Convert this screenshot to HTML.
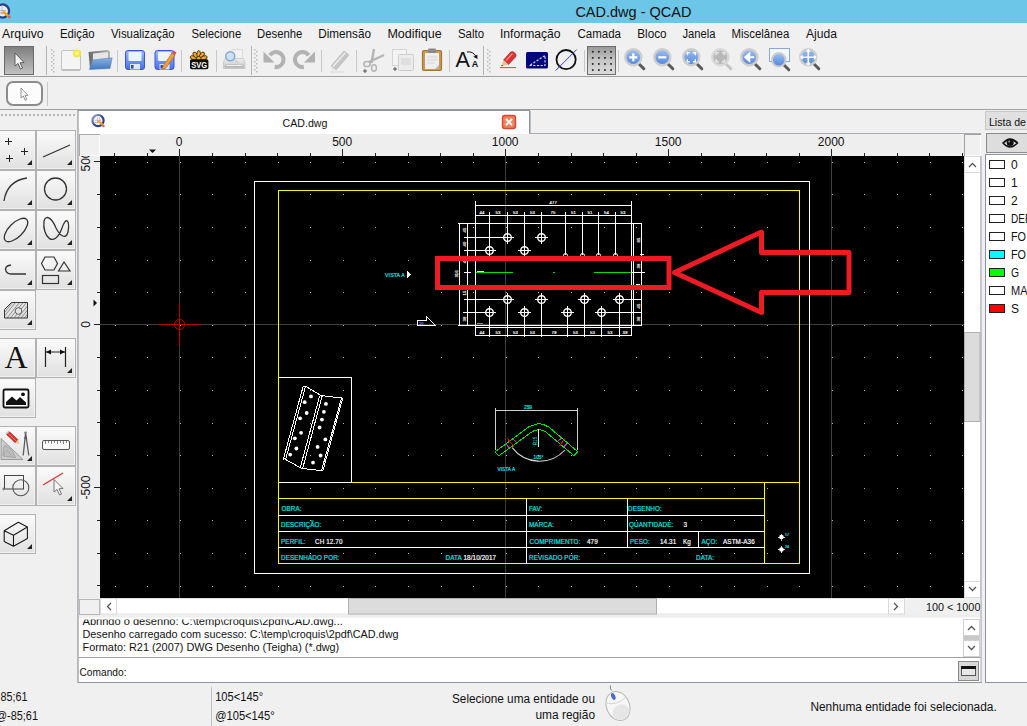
<!DOCTYPE html>
<html><head><meta charset="utf-8">
<style>
*{box-sizing:border-box;margin:0;padding:0}
html,body{width:1027px;height:726px;overflow:hidden;background:#f0f0f0;font-family:"Liberation Sans",sans-serif;font-size:12px;color:#000}
.abs,.abs *{position:absolute}
#title{left:0;top:0;width:1027px;height:23px;background:#6bc6e8}
#title .t{left:575px;top:2px;font-size:15px;color:#111;white-space:nowrap;letter-spacing:-0.1px}
#menu{left:0;top:23px;width:1027px;height:21px;background:#f0f0f0}
#menu span{top:3px;font-size:12.5px;white-space:nowrap}
.hl{height:1px;background:#a0a0a0;left:0;width:1027px}
.sep{width:1px;background:#c4c4c4;top:50px;height:22px}
.grip{width:3px;top:49px;height:24px;background:repeating-linear-gradient(to bottom,#b0b0b0 0 2px,transparent 2px 4px)}
.tbtn{border:1px solid #c9c9c9;background:linear-gradient(#fafafa,#e2e2e2);}
.tri{width:0;height:0;border-left:5px solid transparent;border-bottom:5px solid #222}
.white{background:#fff}
.sb{background:#fff;border:1px solid #d0d0d0}
.txt{white-space:nowrap}
</style></head>
<body>
<div id="title" class="abs"><svg style="left:570px;top:0" width="130" height="23" viewBox="570 0 130 23"><text x="575.4" y="17.3" font-size="15.5" font-family="Liberation Sans" fill="#111" textLength="116" lengthAdjust="spacingAndGlyphs">CAD.dwg - QCAD</text></svg>
<svg style="left:0;top:0" width="16" height="23" viewBox="0 0 16 23"><circle cx="2.500" cy="11" r="6.600" fill="#e8ecf4" stroke="#2a3f8c" stroke-width="2.300"/><path d="M-2 10.500h8M2 6.500v8" stroke="#a8a8b8" stroke-width="0.700"/><path d="M-1 13h5" stroke="#e07070" stroke-width="0.700"/><path d="M3 11.500L8.500 16.200" stroke="#f5a21a" stroke-width="2.600"/><circle cx="9.300" cy="17" r="1.400" fill="#e06060"/></svg>
</div>
<svg class="abs" style="left:0;top:23px" width="1027" height="21" viewBox="0 23 1027 21" font-family="Liberation Sans" font-size="12.5" fill="#111"><text x="2.1" y="38" textLength="41.5" lengthAdjust="spacingAndGlyphs">Arquivo</text><text x="59.9" y="38" textLength="34.7" lengthAdjust="spacingAndGlyphs">Edição</text><text x="111" y="38" textLength="63.6" lengthAdjust="spacingAndGlyphs">Visualização</text><text x="191.4" y="38" textLength="49.8" lengthAdjust="spacingAndGlyphs">Selecione</text><text x="257.1" y="38" textLength="45.2" lengthAdjust="spacingAndGlyphs">Desenhe</text><text x="318.3" y="38" textLength="52.7" lengthAdjust="spacingAndGlyphs">Dimensão</text><text x="387.4" y="38" textLength="54.3" lengthAdjust="spacingAndGlyphs">Modifique</text><text x="458" y="38" textLength="26.0" lengthAdjust="spacingAndGlyphs">Salto</text><text x="500" y="38" textLength="60.6" lengthAdjust="spacingAndGlyphs">Informação</text><text x="577.4" y="38" textLength="43.6" lengthAdjust="spacingAndGlyphs">Camada</text><text x="637.3" y="38" textLength="29.3" lengthAdjust="spacingAndGlyphs">Bloco</text><text x="682.5" y="38" textLength="33.1" lengthAdjust="spacingAndGlyphs">Janela</text><text x="731.5" y="38" textLength="57.8" lengthAdjust="spacingAndGlyphs">Miscelânea</text><text x="806" y="38" textLength="31.0" lengthAdjust="spacingAndGlyphs">Ajuda</text></svg>
<div class="abs hl" style="top:76px"></div>
<div class="abs hl" style="top:109px"></div>
<svg class="abs" style="left:0;top:44px" width="1027" height="66" viewBox="0 44 1027 66">
<defs>
<linearGradient id="gPress" x1="0" y1="0" x2="0" y2="1"><stop offset="0" stop-color="#7e7e7e"/><stop offset="1" stop-color="#c2c2c2"/></linearGradient>
<linearGradient id="gBlue" x1="0" y1="0" x2="0" y2="1"><stop offset="0" stop-color="#9cbcff"/><stop offset="1" stop-color="#4470ec"/></linearGradient>
<linearGradient id="gFold" x1="0" y1="0" x2="0" y2="1"><stop offset="0" stop-color="#8db3e2"/><stop offset="1" stop-color="#3f78c0"/></linearGradient>
<linearGradient id="gLens" x1="0" y1="0" x2="0" y2="1"><stop offset="0" stop-color="#9cc0f2"/><stop offset="1" stop-color="#5286dc"/></linearGradient>
<radialGradient id="gLensG" cx="0.4" cy="0.35" r="0.7"><stop offset="0" stop-color="#e6e6e6"/><stop offset="1" stop-color="#a8a8a8"/></radialGradient>
<g id="mag"><line x1="16" y1="17" x2="20.5" y2="21.5" stroke="#5a5a5a" stroke-width="3" stroke-linecap="round"/><circle cx="10" cy="10" r="8" fill="url(#gLens)" stroke="#cdcdcd" stroke-width="2.4"/></g>
</defs>
<!-- pressed arrow button -->
<rect x="4.5" y="46.5" width="29" height="28" fill="url(#gPress)" stroke="#6a6a6a"/>
<path d="M15 53 L15 66 L18 63.5 L20.5 69 L22.5 68 L20 62.8 L24 62.5 Z" fill="#f4f4f4" stroke="#555" stroke-width="0.9"/>
<rect x="46" y="46" width="1" height="29" fill="#b4b4b4"/>
<!-- grips -->
<g fill="#bcbcbc"><g id="grp"><rect x="51" y="49" width="1.500" height="1.500"/><rect x="53" y="51" width="1.500" height="1.500"/><rect x="51" y="53" width="1.500" height="1.500"/><rect x="53" y="55" width="1.500" height="1.500"/><rect x="51" y="57" width="1.500" height="1.500"/><rect x="53" y="59" width="1.500" height="1.500"/><rect x="51" y="61" width="1.500" height="1.500"/><rect x="53" y="63" width="1.500" height="1.500"/><rect x="51" y="65" width="1.500" height="1.500"/><rect x="53" y="67" width="1.500" height="1.500"/><rect x="51" y="69" width="1.500" height="1.500"/><rect x="53" y="71" width="1.500" height="1.500"/></g>
<use href="#grp" x="203"/><use href="#grp" x="436"/></g>
<!-- new -->
<rect x="61.5" y="50.5" width="19" height="20" rx="1.5" fill="#f4f4f4" stroke="#c2c2c2"/><rect x="62" y="69" width="18" height="1.5" fill="#bdbdbd"/>
<circle cx="77" cy="53.5" r="4" fill="#f2ea3a"/><circle cx="77" cy="53.5" r="2" fill="#fffb9a"/>
<!-- open -->
<linearGradient id="gBack" x1="0" y1="0" x2="1" y2="0"><stop offset="0" stop-color="#6a6a6a"/><stop offset="1" stop-color="#b4b4b4"/></linearGradient>
<path d="M88.500 52 L107.500 50 L110 51.500 L110 68 L90 69 Z" fill="url(#gBack)"/><path d="M93 53.500 L108 52 L108 62 L93 63 Z" fill="#e6e6e6"/>
<path d="M92.500 60 L112.200 57.800 L110 68.500 L89.500 69.500 Z" fill="url(#gFold)" stroke="#4a78b8" stroke-width="0.500"/>
<rect x="117" y="50" width="1" height="22" fill="#c8c8c8"/>
<!-- save -->
<g id="flop"><rect x="125.5" y="50.5" width="19" height="19" rx="2.5" fill="url(#gBlue)" stroke="#4152d6"/><rect x="128.5" y="52" width="13" height="9" rx="1" fill="#eef4ff"/><rect x="130" y="64" width="10" height="5.5" fill="#dfe6f6"/><rect x="131" y="65" width="2.5" height="3.5" fill="#2a45c8"/></g>
<use href="#flop" x="29.5"/>
<path d="M163 66 L172 53 L175 55 L166 68 L162 69.5 Z" fill="#f0a030" stroke="#b06010" stroke-width="0.6"/><path d="M172 53 L173.5 50.5 L176.5 52.5 L175 55 Z" fill="#e05050"/>
<rect x="181" y="50" width="1" height="22" fill="#c8c8c8"/>
<!-- svg icon -->
<g fill="#f5a623" stroke="#111" stroke-width="0.700"><ellipse cx="198.700" cy="54.200" rx="1.900" ry="3.600" transform="rotate(-72 198.700 59.500)"/><ellipse cx="198.700" cy="54.200" rx="1.900" ry="3.600" transform="rotate(-36 198.700 59.500)"/><ellipse cx="198.700" cy="54.200" rx="1.900" ry="3.600" transform="rotate(0 198.700 59.500)"/><ellipse cx="198.700" cy="54.200" rx="1.900" ry="3.600" transform="rotate(36 198.700 59.500)"/><ellipse cx="198.700" cy="54.200" rx="1.900" ry="3.600" transform="rotate(72 198.700 59.500)"/><circle cx="198.700" cy="58.800" r="2.400"/></g>
<rect x="190" y="59.300" width="18.400" height="9.900" rx="1.800" fill="#0a0a0a"/>
<text x="191.300" y="68.200" font-size="9.800" font-weight="bold" fill="#fff" font-family="Liberation Sans" textLength="15.800" lengthAdjust="spacingAndGlyphs">SVG</text>
<rect x="216" y="50" width="1" height="22" fill="#c8c8c8"/>
<!-- print preview -->
<linearGradient id="gPr" x1="0" y1="0" x2="0" y2="1"><stop offset="0" stop-color="#f0f0f0"/><stop offset="1" stop-color="#c4c4c4"/></linearGradient>
<rect x="232" y="49.500" width="10.500" height="9" fill="#f2f2f2" stroke="#cfcfcf" stroke-width="0.600"/>
<path d="M225 58.500 L243.500 58.500 L245 62 L245 68.500 L223.500 68.500 L223.500 62 Z" fill="url(#gPr)" stroke="#bcbcbc" stroke-width="0.600"/><rect x="225" y="64.500" width="18.500" height="3" rx="1" fill="#b0b0b0"/><rect x="226" y="65" width="16.500" height="1.200" fill="#ececec"/>
<path d="M233.500 59.500 L239 63.500" stroke="#d4d4d4" stroke-width="2.600" stroke-linecap="round"/><circle cx="230.200" cy="56.200" r="4.500" fill="#cfe0f6" stroke="#88a6d4" stroke-width="1.500"/>
<rect x="251" y="46" width="1" height="29" fill="#b4b4b4"/>
<!-- undo/redo -->
<g id="undo"><path d="M269.900 55.200 A7.500 7.500 0 1 1 274.700 66.900" fill="none" stroke="#b2b2b2" stroke-width="4.200"/><path d="M263.500 51.500 L263.500 62.500 L274.500 62.500 Z" fill="#b2b2b2"/></g>
<use href="#undo" transform="translate(578.500,0) scale(-1,1)"/>
<rect x="321" y="50" width="1" height="22" fill="#c8c8c8"/>
<!-- eraser pencil -->
<path d="M331 66 L344 51 L349 55 L336 70 Z" fill="#c6c6c6" stroke="#b0b0b0" stroke-width="0.6"/><path d="M333 66.500 L345 53" stroke="#eee" stroke-width="1.500"/><path d="M331 66 L336 70 L332 71.500 Z" fill="#e8e8e8"/><rect x="330" y="71.500" width="14" height="1" fill="#d8d8d8"/>
<rect x="356" y="50" width="1" height="22" fill="#c8c8c8"/>
<!-- scissors -->
<g stroke="#b4b4b4" fill="none"><path d="M374 49 L371.500 63" stroke-width="2.400"/><path d="M384 55 L369 62" stroke-width="2.400"/><ellipse cx="367" cy="64" rx="3.200" ry="2.600" stroke-width="1.500"/><ellipse cx="374" cy="68" rx="2.400" ry="3.200" stroke-width="1.500"/></g>
<path d="M363 71 L367 71 M365 69 L365 73" stroke="#555" stroke-width="1"/>
<!-- copy -->
<rect x="392.500" y="49.500" width="14" height="16" fill="#f4f4f4" stroke="#d4d4d4"/><rect x="398.500" y="54.500" width="15" height="16" rx="1" fill="#ececec" stroke="#cdcdcd"/><rect x="401" y="58" width="10" height="7" fill="#dedede"/>
<path d="M393 69 L397 69 M395 67 L395 71" stroke="#555" stroke-width="1"/>
<!-- paste -->
<rect x="422.500" y="50.500" width="19" height="20" rx="1.500" fill="#c89a58" stroke="#a87428" stroke-width="1.200"/><rect x="425" y="53" width="14" height="16" fill="#eeeeee"/><rect x="428" y="48.500" width="8" height="4.500" rx="1" fill="#8a8a8a"/><path d="M427 57h10M427 60h10M427 63h8" stroke="#d6d6d6"/><path d="M439 65 L439 69 L435 69 Z" fill="#b4b4b4"/>
<rect x="449" y="50" width="1" height="22" fill="#c8c8c8"/>
<!-- A A -->
<text x="455.500" y="67" font-size="21.500" fill="#111" font-family="Liberation Sans">A</text><text x="471.800" y="67" font-size="9" fill="#111" font-family="Liberation Sans" font-weight="bold">A</text>
<path d="M467 52 Q473 51 476 56.500" fill="none" stroke="#111" stroke-width="1"/><path d="M477.500 59 L473.300 56.800 L477.300 54.800 Z" fill="#111"/>
<rect x="483" y="46" width="1" height="29" fill="#b4b4b4"/>
<!-- red pencil -->
<path d="M503.500 60 L510.500 52.300 Q512.300 50.800 514 52.300 L515.500 53.800 Q516.800 55.500 515.500 57 L508.500 64.500 Z" fill="#dc3232" stroke="#a01c1c" stroke-width="0.600"/><path d="M506 60.500 L512.500 53.500" stroke="#f49090" stroke-width="1.200"/><path d="M503.500 60 L508.500 64.500 L501 66.300 Z" fill="#e8c48c"/><path d="M502.300 64.800 L501 66.300 L503 65.900Z" fill="#333"/><rect x="500" y="67" width="16" height="1.100" fill="#f05050"/>
<!-- blue rect -->
<rect x="526" y="52" width="22" height="16.500" rx="1.500" fill="#06067c"/><path d="M529.500 65.500 L545 65.500 L545 55.500 Z" fill="none" stroke="#e0e4ff" stroke-width="1.100" stroke-dasharray="2.200 1.500"/>
<!-- circle + line -->
<circle cx="566.100" cy="59.600" r="9.600" fill="none" stroke="#111" stroke-width="1.800"/><path d="M555.600 70.600 L576.700 49.500" stroke="#3434ff" stroke-width="1"/>
<rect x="584" y="50" width="1" height="22" fill="#c8c8c8"/>
<!-- grid button -->
<linearGradient id="gGrid" x1="0" y1="0" x2="0" y2="1"><stop offset="0" stop-color="#989898"/><stop offset="0.5" stop-color="#c6c6c6"/><stop offset="1" stop-color="#dcdcdc"/></linearGradient>
<rect x="587.5" y="46.5" width="28" height="28" fill="url(#gGrid)" stroke="#6e6e6e"/>
<g fill="#222"><rect x="591.9" y="50.9" width="1.7" height="1.7"/><rect x="591.9" y="57.0" width="1.7" height="1.7"/><rect x="591.9" y="63.1" width="1.7" height="1.7"/><rect x="591.9" y="69.2" width="1.7" height="1.7"/><rect x="598.0" y="50.9" width="1.7" height="1.7"/><rect x="598.0" y="57.0" width="1.7" height="1.7"/><rect x="598.0" y="63.1" width="1.7" height="1.7"/><rect x="598.0" y="69.2" width="1.7" height="1.7"/><rect x="604.1" y="50.9" width="1.7" height="1.7"/><rect x="604.1" y="57.0" width="1.7" height="1.7"/><rect x="604.1" y="63.1" width="1.7" height="1.7"/><rect x="604.1" y="69.2" width="1.7" height="1.7"/><rect x="610.2" y="50.9" width="1.7" height="1.7"/><rect x="610.2" y="57.0" width="1.7" height="1.7"/><rect x="610.2" y="63.1" width="1.7" height="1.7"/><rect x="610.2" y="69.2" width="1.7" height="1.7"/></g>
<rect x="618" y="50" width="1" height="22" fill="#c8c8c8"/>
<g transform="translate(-0.700,-1.700)">
<!-- zoom icons -->
<use href="#mag" x="624" y="49"/><path d="M630 59h8M634 55v8" stroke="#fff" stroke-width="2.200"/>
<use href="#mag" x="653" y="49"/><path d="M659 59h8" stroke="#fff" stroke-width="2.200"/>
<use href="#mag" x="682" y="49"/><path d="M688 57v-2.500h2.500M693.500 54.500h2.500v2.500M696 61v2.500h-2.500M690.500 63.500h-2.500v-2.500" stroke="#fff" stroke-width="1.400" fill="none"/>
<g><line x1="727" y1="66" x2="731.500" y2="70.500" stroke="#c4c4c4" stroke-width="3" stroke-linecap="round"/><circle cx="721" cy="59" r="8" fill="#b8b8b8" stroke="#d8d8d8" stroke-width="2.400"/><path d="M717 57v-2.500h2.500M722.500 54.500h2.500v2.500M725 61v2.500h-2.500M719.500 63.500h-2.500v-2.500" stroke="#e6e6e6" stroke-width="1.600" fill="none"/></g>
<use href="#mag" x="740" y="49"/><path d="M755 59h-8M750 55.500L746 59l4 3.500z" stroke="#fff" stroke-width="2" fill="#fff"/>
<rect x="770.200" y="50.200" width="20" height="13" fill="#f4f8ff" stroke="#88a8d8"/><line x1="785" y1="67" x2="789.5" y2="71.5" stroke="#5a5a5a" stroke-width="3" stroke-linecap="round"/><circle cx="779.500" cy="61.5" r="6.8" fill="url(#gLens)" stroke="#cdcdcd" stroke-width="2"/>
<use href="#mag" x="799" y="49"/><path d="M809 52.500v13M802.500 59h13" stroke="#fff" stroke-width="1.600"/><path d="M809 50.500l-2.500 3h5zM809 67.500l-2.500-3h5zM800.500 59l3-2.500v5zM817.500 59l-3-2.500v5z" fill="#fff"/>
</g>
<!-- toolbar2 -->
<rect x="7" y="82" width="35" height="23" rx="6" fill="#fcfcfc" stroke="#8c8c8c" stroke-width="2"/>
<path d="M21 88 L21 98 L23.300 96 L25.200 100.300 L26.800 99.600 L24.900 95.500 L28 95.300 Z" fill="#fff" stroke="#777" stroke-width="0.800"/>
<rect x="47" y="82" width="1" height="24" fill="#c8c8c8"/>
</svg>

<svg class="abs" style="left:100px;top:156px" width="864" height="442" viewBox="100 156 864 442" font-family="Liberation Sans" shape-rendering="crispEdges">
<rect x="100" y="156" width="864" height="442" fill="#000"/>
<path d="M115 162h1v1h-1zM115 194h1v1h-1zM115 227h1v1h-1zM115 260h1v1h-1zM115 292h1v1h-1zM115 325h1v1h-1zM115 357h1v1h-1zM115 390h1v1h-1zM115 423h1v1h-1zM115 455h1v1h-1zM115 488h1v1h-1zM115 520h1v1h-1zM115 553h1v1h-1zM115 586h1v1h-1zM147 162h1v1h-1zM147 194h1v1h-1zM147 227h1v1h-1zM147 260h1v1h-1zM147 292h1v1h-1zM147 325h1v1h-1zM147 357h1v1h-1zM147 390h1v1h-1zM147 423h1v1h-1zM147 455h1v1h-1zM147 488h1v1h-1zM147 520h1v1h-1zM147 553h1v1h-1zM147 586h1v1h-1zM180 162h1v1h-1zM180 194h1v1h-1zM180 227h1v1h-1zM180 260h1v1h-1zM180 292h1v1h-1zM180 325h1v1h-1zM180 357h1v1h-1zM180 390h1v1h-1zM180 423h1v1h-1zM180 455h1v1h-1zM180 488h1v1h-1zM180 520h1v1h-1zM180 553h1v1h-1zM180 586h1v1h-1zM212 162h1v1h-1zM212 194h1v1h-1zM212 227h1v1h-1zM212 260h1v1h-1zM212 292h1v1h-1zM212 325h1v1h-1zM212 357h1v1h-1zM212 390h1v1h-1zM212 423h1v1h-1zM212 455h1v1h-1zM212 488h1v1h-1zM212 520h1v1h-1zM212 553h1v1h-1zM212 586h1v1h-1zM245 162h1v1h-1zM245 194h1v1h-1zM245 227h1v1h-1zM245 260h1v1h-1zM245 292h1v1h-1zM245 325h1v1h-1zM245 357h1v1h-1zM245 390h1v1h-1zM245 423h1v1h-1zM245 455h1v1h-1zM245 488h1v1h-1zM245 520h1v1h-1zM245 553h1v1h-1zM245 586h1v1h-1zM278 162h1v1h-1zM278 194h1v1h-1zM278 227h1v1h-1zM278 260h1v1h-1zM278 292h1v1h-1zM278 325h1v1h-1zM278 357h1v1h-1zM278 390h1v1h-1zM278 423h1v1h-1zM278 455h1v1h-1zM278 488h1v1h-1zM278 520h1v1h-1zM278 553h1v1h-1zM278 586h1v1h-1zM310 162h1v1h-1zM310 194h1v1h-1zM310 227h1v1h-1zM310 260h1v1h-1zM310 292h1v1h-1zM310 325h1v1h-1zM310 357h1v1h-1zM310 390h1v1h-1zM310 423h1v1h-1zM310 455h1v1h-1zM310 488h1v1h-1zM310 520h1v1h-1zM310 553h1v1h-1zM310 586h1v1h-1zM343 162h1v1h-1zM343 194h1v1h-1zM343 227h1v1h-1zM343 260h1v1h-1zM343 292h1v1h-1zM343 325h1v1h-1zM343 357h1v1h-1zM343 390h1v1h-1zM343 423h1v1h-1zM343 455h1v1h-1zM343 488h1v1h-1zM343 520h1v1h-1zM343 553h1v1h-1zM343 586h1v1h-1zM375 162h1v1h-1zM375 194h1v1h-1zM375 227h1v1h-1zM375 260h1v1h-1zM375 292h1v1h-1zM375 325h1v1h-1zM375 357h1v1h-1zM375 390h1v1h-1zM375 423h1v1h-1zM375 455h1v1h-1zM375 488h1v1h-1zM375 520h1v1h-1zM375 553h1v1h-1zM375 586h1v1h-1zM408 162h1v1h-1zM408 194h1v1h-1zM408 227h1v1h-1zM408 260h1v1h-1zM408 292h1v1h-1zM408 325h1v1h-1zM408 357h1v1h-1zM408 390h1v1h-1zM408 423h1v1h-1zM408 455h1v1h-1zM408 488h1v1h-1zM408 520h1v1h-1zM408 553h1v1h-1zM408 586h1v1h-1zM441 162h1v1h-1zM441 194h1v1h-1zM441 227h1v1h-1zM441 260h1v1h-1zM441 292h1v1h-1zM441 325h1v1h-1zM441 357h1v1h-1zM441 390h1v1h-1zM441 423h1v1h-1zM441 455h1v1h-1zM441 488h1v1h-1zM441 520h1v1h-1zM441 553h1v1h-1zM441 586h1v1h-1zM473 162h1v1h-1zM473 194h1v1h-1zM473 227h1v1h-1zM473 260h1v1h-1zM473 292h1v1h-1zM473 325h1v1h-1zM473 357h1v1h-1zM473 390h1v1h-1zM473 423h1v1h-1zM473 455h1v1h-1zM473 488h1v1h-1zM473 520h1v1h-1zM473 553h1v1h-1zM473 586h1v1h-1zM506 162h1v1h-1zM506 194h1v1h-1zM506 227h1v1h-1zM506 260h1v1h-1zM506 292h1v1h-1zM506 325h1v1h-1zM506 357h1v1h-1zM506 390h1v1h-1zM506 423h1v1h-1zM506 455h1v1h-1zM506 488h1v1h-1zM506 520h1v1h-1zM506 553h1v1h-1zM506 586h1v1h-1zM538 162h1v1h-1zM538 194h1v1h-1zM538 227h1v1h-1zM538 260h1v1h-1zM538 292h1v1h-1zM538 325h1v1h-1zM538 357h1v1h-1zM538 390h1v1h-1zM538 423h1v1h-1zM538 455h1v1h-1zM538 488h1v1h-1zM538 520h1v1h-1zM538 553h1v1h-1zM538 586h1v1h-1zM571 162h1v1h-1zM571 194h1v1h-1zM571 227h1v1h-1zM571 260h1v1h-1zM571 292h1v1h-1zM571 325h1v1h-1zM571 357h1v1h-1zM571 390h1v1h-1zM571 423h1v1h-1zM571 455h1v1h-1zM571 488h1v1h-1zM571 520h1v1h-1zM571 553h1v1h-1zM571 586h1v1h-1zM604 162h1v1h-1zM604 194h1v1h-1zM604 227h1v1h-1zM604 260h1v1h-1zM604 292h1v1h-1zM604 325h1v1h-1zM604 357h1v1h-1zM604 390h1v1h-1zM604 423h1v1h-1zM604 455h1v1h-1zM604 488h1v1h-1zM604 520h1v1h-1zM604 553h1v1h-1zM604 586h1v1h-1zM636 162h1v1h-1zM636 194h1v1h-1zM636 227h1v1h-1zM636 260h1v1h-1zM636 292h1v1h-1zM636 325h1v1h-1zM636 357h1v1h-1zM636 390h1v1h-1zM636 423h1v1h-1zM636 455h1v1h-1zM636 488h1v1h-1zM636 520h1v1h-1zM636 553h1v1h-1zM636 586h1v1h-1zM669 162h1v1h-1zM669 194h1v1h-1zM669 227h1v1h-1zM669 260h1v1h-1zM669 292h1v1h-1zM669 325h1v1h-1zM669 357h1v1h-1zM669 390h1v1h-1zM669 423h1v1h-1zM669 455h1v1h-1zM669 488h1v1h-1zM669 520h1v1h-1zM669 553h1v1h-1zM669 586h1v1h-1zM701 162h1v1h-1zM701 194h1v1h-1zM701 227h1v1h-1zM701 260h1v1h-1zM701 292h1v1h-1zM701 325h1v1h-1zM701 357h1v1h-1zM701 390h1v1h-1zM701 423h1v1h-1zM701 455h1v1h-1zM701 488h1v1h-1zM701 520h1v1h-1zM701 553h1v1h-1zM701 586h1v1h-1zM734 162h1v1h-1zM734 194h1v1h-1zM734 227h1v1h-1zM734 260h1v1h-1zM734 292h1v1h-1zM734 325h1v1h-1zM734 357h1v1h-1zM734 390h1v1h-1zM734 423h1v1h-1zM734 455h1v1h-1zM734 488h1v1h-1zM734 520h1v1h-1zM734 553h1v1h-1zM734 586h1v1h-1zM767 162h1v1h-1zM767 194h1v1h-1zM767 227h1v1h-1zM767 260h1v1h-1zM767 292h1v1h-1zM767 325h1v1h-1zM767 357h1v1h-1zM767 390h1v1h-1zM767 423h1v1h-1zM767 455h1v1h-1zM767 488h1v1h-1zM767 520h1v1h-1zM767 553h1v1h-1zM767 586h1v1h-1zM799 162h1v1h-1zM799 194h1v1h-1zM799 227h1v1h-1zM799 260h1v1h-1zM799 292h1v1h-1zM799 325h1v1h-1zM799 357h1v1h-1zM799 390h1v1h-1zM799 423h1v1h-1zM799 455h1v1h-1zM799 488h1v1h-1zM799 520h1v1h-1zM799 553h1v1h-1zM799 586h1v1h-1zM832 162h1v1h-1zM832 194h1v1h-1zM832 227h1v1h-1zM832 260h1v1h-1zM832 292h1v1h-1zM832 325h1v1h-1zM832 357h1v1h-1zM832 390h1v1h-1zM832 423h1v1h-1zM832 455h1v1h-1zM832 488h1v1h-1zM832 520h1v1h-1zM832 553h1v1h-1zM832 586h1v1h-1zM864 162h1v1h-1zM864 194h1v1h-1zM864 227h1v1h-1zM864 260h1v1h-1zM864 292h1v1h-1zM864 325h1v1h-1zM864 357h1v1h-1zM864 390h1v1h-1zM864 423h1v1h-1zM864 455h1v1h-1zM864 488h1v1h-1zM864 520h1v1h-1zM864 553h1v1h-1zM864 586h1v1h-1zM897 162h1v1h-1zM897 194h1v1h-1zM897 227h1v1h-1zM897 260h1v1h-1zM897 292h1v1h-1zM897 325h1v1h-1zM897 357h1v1h-1zM897 390h1v1h-1zM897 423h1v1h-1zM897 455h1v1h-1zM897 488h1v1h-1zM897 520h1v1h-1zM897 553h1v1h-1zM897 586h1v1h-1zM930 162h1v1h-1zM930 194h1v1h-1zM930 227h1v1h-1zM930 260h1v1h-1zM930 292h1v1h-1zM930 325h1v1h-1zM930 357h1v1h-1zM930 390h1v1h-1zM930 423h1v1h-1zM930 455h1v1h-1zM930 488h1v1h-1zM930 520h1v1h-1zM930 553h1v1h-1zM930 586h1v1h-1zM962 162h1v1h-1zM962 194h1v1h-1zM962 227h1v1h-1zM962 260h1v1h-1zM962 292h1v1h-1zM962 325h1v1h-1zM962 357h1v1h-1zM962 390h1v1h-1zM962 423h1v1h-1zM962 455h1v1h-1zM962 488h1v1h-1zM962 520h1v1h-1zM962 553h1v1h-1zM962 586h1v1h-1z" fill="#b4b4b4"/>
<rect x="179" y="156" width="1" height="442" fill="#404040"/>
<rect x="505" y="156" width="1" height="442" fill="#404040"/>
<rect x="831" y="156" width="1" height="442" fill="#404040"/>
<rect x="100" y="324" width="865" height="1" fill="#404040"/>
<rect x="159" y="324" width="42" height="1" fill="#c00000"/><rect x="179" y="304" width="1" height="42" fill="#c00000"/><circle cx="179.500" cy="324.500" r="5" fill="none" stroke="#c00000" stroke-width="1" shape-rendering="auto"/>
<rect x="254" y="181" width="556" height="1" fill="#ffffff"/>
<rect x="254" y="573" width="556" height="1" fill="#ffffff"/>
<rect x="254" y="181" width="1" height="393" fill="#ffffff"/>
<rect x="809" y="181" width="1" height="393" fill="#ffffff"/>
<rect x="278" y="190" width="522" height="1" fill="#ffff00"/>
<rect x="278" y="563" width="522" height="1" fill="#ffff00"/>
<rect x="278" y="190" width="1" height="374" fill="#ffff00"/>
<rect x="799" y="190" width="1" height="374" fill="#ffff00"/>
<rect x="352" y="482" width="448" height="1" fill="#ffff00"/>
<rect x="278" y="498" width="487" height="1" fill="#ffff00"/>
<rect x="764" y="482" width="1" height="82" fill="#ffff00"/>
<rect x="278" y="515" width="487" height="1" fill="#ffffff"/>
<rect x="278" y="531" width="487" height="1" fill="#ffffff"/>
<rect x="278" y="547" width="487" height="1" fill="#ffffff"/>
<rect x="526" y="498" width="1" height="66" fill="#ffffff"/>
<rect x="627" y="498" width="1" height="50" fill="#ffffff"/>
<rect x="698" y="531" width="1" height="17" fill="#ffffff"/>
<rect x="278" y="377" width="74" height="1" fill="#ffffff"/>
<rect x="278" y="482" width="74" height="1" fill="#ffffff"/>
<rect x="351" y="377" width="1" height="106" fill="#ffffff"/>
<rect x="278" y="377" width="1" height="106" fill="#ffff00"/>
<text x="281.5" y="510.8" font-size="6.3" fill="#00e8e8" stroke="#00e8e8" stroke-width="0.18" letter-spacing="0.12" shape-rendering="auto" >OBRA:</text>
<text x="281" y="526.8" font-size="6.3" fill="#00e8e8" stroke="#00e8e8" stroke-width="0.18" letter-spacing="0.12" shape-rendering="auto" >DESCRIÇÃO:</text>
<text x="281" y="544.2" font-size="6.3" fill="#00e8e8" stroke="#00e8e8" stroke-width="0.18" letter-spacing="0.12" shape-rendering="auto" >PERFIL:</text>
<text x="315" y="544.2" font-size="6.3" fill="#ffffff" stroke="#ffffff" stroke-width="0.18" letter-spacing="0.12" shape-rendering="auto" >CH 12.70</text>
<text x="281" y="559.8" font-size="6.3" fill="#00e8e8" stroke="#00e8e8" stroke-width="0.18" letter-spacing="0.12" shape-rendering="auto" >DESENHADO POR:</text>
<text x="445.5" y="559.8" font-size="6.3" fill="#00e8e8" stroke="#00e8e8" stroke-width="0.18" letter-spacing="0.12" shape-rendering="auto" >DATA</text>
<text x="463.5" y="559.8" font-size="6.3" fill="#ffffff" stroke="#ffffff" stroke-width="0.18" letter-spacing="0.12" shape-rendering="auto" >18/10/2017</text>
<text x="529" y="510.8" font-size="6.3" fill="#00e8e8" stroke="#00e8e8" stroke-width="0.18" letter-spacing="0.12" shape-rendering="auto" >FAV:</text>
<text x="529" y="526.8" font-size="6.3" fill="#00e8e8" stroke="#00e8e8" stroke-width="0.18" letter-spacing="0.12" shape-rendering="auto" >MARCA:</text>
<text x="529.5" y="544.2" font-size="6.3" fill="#00e8e8" stroke="#00e8e8" stroke-width="0.18" letter-spacing="0.12" shape-rendering="auto" >COMPRIMENTO:</text>
<text x="587" y="544.2" font-size="6.3" fill="#ffffff" stroke="#ffffff" stroke-width="0.18" letter-spacing="0.12" shape-rendering="auto" >479</text>
<text x="529" y="559.8" font-size="6.3" fill="#00e8e8" stroke="#00e8e8" stroke-width="0.18" letter-spacing="0.12" shape-rendering="auto" >REVISADO POR:</text>
<text x="628" y="510.8" font-size="6.3" fill="#00e8e8" stroke="#00e8e8" stroke-width="0.18" letter-spacing="0.12" shape-rendering="auto" >DESENHO:</text>
<text x="629" y="526.8" font-size="6.3" fill="#00e8e8" stroke="#00e8e8" stroke-width="0.18" letter-spacing="0.12" shape-rendering="auto" >QUANTIDADE:</text>
<text x="683.5" y="526.8" font-size="6.3" fill="#ffffff" stroke="#ffffff" stroke-width="0.18" letter-spacing="0.12" shape-rendering="auto" >3</text>
<text x="630" y="544.2" font-size="6.3" fill="#00e8e8" stroke="#00e8e8" stroke-width="0.18" letter-spacing="0.12" shape-rendering="auto" >PESO:</text>
<text x="660" y="544.2" font-size="6.3" fill="#ffffff" stroke="#ffffff" stroke-width="0.18" letter-spacing="0.12" shape-rendering="auto" >14.31</text>
<text x="683" y="544.2" font-size="6.3" fill="#ffffff" stroke="#ffffff" stroke-width="0.18" letter-spacing="0.12" shape-rendering="auto" >Kg</text>
<text x="701.5" y="544.2" font-size="6.3" fill="#00e8e8" stroke="#00e8e8" stroke-width="0.18" letter-spacing="0.12" shape-rendering="auto" >AÇO:</text>
<text x="723" y="544.2" font-size="6.3" fill="#ffffff" stroke="#ffffff" stroke-width="0.18" letter-spacing="0.12" shape-rendering="auto" >ASTM-A36</text>
<text x="696" y="559.8" font-size="6.3" fill="#00e8e8" stroke="#00e8e8" stroke-width="0.18" letter-spacing="0.12" shape-rendering="auto" >DATA:</text>
<circle cx="781.500" cy="537" r="2.300" fill="#ffffff" shape-rendering="auto"/><path d="M778 537h7M781.500 533.5v7" stroke="#ffffff" stroke-width="0.800"/>
<text x="785" y="535.5" font-size="3.6" fill="#00e8e8" stroke="#00e8e8" stroke-width="0.18" letter-spacing="0.12" shape-rendering="auto" >17</text>
<circle cx="781.500" cy="549.5" r="2.300" fill="#ffffff" shape-rendering="auto"/><path d="M778 549.5h7M781.500 546.0v7" stroke="#ffffff" stroke-width="0.800"/>
<text x="785" y="548.0" font-size="3.6" fill="#00e8e8" stroke="#00e8e8" stroke-width="0.18" letter-spacing="0.12" shape-rendering="auto" >24</text>
<rect x="475" y="205" width="157" height="1" fill="#ffffff"/>
<rect x="475" y="215" width="157" height="1" fill="#ffffff"/>
<rect x="475" y="201" width="1" height="23" fill="#ffffff"/>
<rect x="631" y="201" width="1" height="23" fill="#ffffff"/>
<rect x="489" y="212" width="1" height="7" fill="#ffffff"/>
<rect x="507" y="212" width="1" height="7" fill="#ffffff"/>
<rect x="524" y="212" width="1" height="7" fill="#ffffff"/>
<rect x="541" y="212" width="1" height="7" fill="#ffffff"/>
<rect x="565" y="212" width="1" height="7" fill="#ffffff"/>
<rect x="582" y="212" width="1" height="7" fill="#ffffff"/>
<rect x="598" y="212" width="1" height="7" fill="#ffffff"/>
<rect x="615" y="212" width="1" height="7" fill="#ffffff"/>
<text x="549.5" y="204" font-size="4.2" fill="#ffffff" stroke="#ffffff" stroke-width="0.18" letter-spacing="0.12" shape-rendering="auto" >477</text>
<text x="479.4" y="214" font-size="4.3" fill="#ffffff" stroke="#ffffff" stroke-width="0.18" letter-spacing="0.12" shape-rendering="auto" >44</text>
<text x="495.4" y="214" font-size="4.3" fill="#ffffff" stroke="#ffffff" stroke-width="0.18" letter-spacing="0.12" shape-rendering="auto" >53</text>
<text x="512.9" y="214" font-size="4.3" fill="#ffffff" stroke="#ffffff" stroke-width="0.18" letter-spacing="0.12" shape-rendering="auto" >53</text>
<text x="529.9" y="214" font-size="4.3" fill="#ffffff" stroke="#ffffff" stroke-width="0.18" letter-spacing="0.12" shape-rendering="auto" >53</text>
<text x="550.4" y="214" font-size="4.3" fill="#ffffff" stroke="#ffffff" stroke-width="0.18" letter-spacing="0.12" shape-rendering="auto" >75</text>
<text x="570.9" y="214" font-size="4.3" fill="#ffffff" stroke="#ffffff" stroke-width="0.18" letter-spacing="0.12" shape-rendering="auto" >51</text>
<text x="587.4" y="214" font-size="4.3" fill="#ffffff" stroke="#ffffff" stroke-width="0.18" letter-spacing="0.12" shape-rendering="auto" >51</text>
<text x="603.9" y="214" font-size="4.3" fill="#ffffff" stroke="#ffffff" stroke-width="0.18" letter-spacing="0.12" shape-rendering="auto" >54</text>
<text x="620.4" y="214" font-size="4.3" fill="#ffffff" stroke="#ffffff" stroke-width="0.18" letter-spacing="0.12" shape-rendering="auto" >53</text>
<rect x="458" y="223" width="184" height="1" fill="#ffffff"/>
<rect x="458" y="325" width="184" height="1" fill="#ffffff"/>
<rect x="475" y="223" width="1" height="113" fill="#ffffff"/>
<rect x="631" y="223" width="1" height="113" fill="#ffffff"/>
<rect x="459" y="223" width="1" height="103" fill="#ffffff"/>
<rect x="467" y="223" width="1" height="103" fill="#ffffff"/>
<rect x="633" y="223" width="1" height="103" fill="#ffffff"/>
<rect x="641" y="223" width="1" height="103" fill="#ffffff"/>
<rect x="475" y="327" width="157" height="1" fill="#ffffff"/>
<rect x="475" y="335" width="157" height="1" fill="#ffffff"/>
<rect x="489" y="325" width="1" height="12" fill="#ffffff"/>
<rect x="507" y="325" width="1" height="12" fill="#ffffff"/>
<rect x="524" y="325" width="1" height="12" fill="#ffffff"/>
<rect x="541" y="325" width="1" height="12" fill="#ffffff"/>
<rect x="567" y="325" width="1" height="12" fill="#ffffff"/>
<rect x="584" y="325" width="1" height="12" fill="#ffffff"/>
<rect x="601" y="325" width="1" height="12" fill="#ffffff"/>
<rect x="619" y="325" width="1" height="12" fill="#ffffff"/>
<text x="479.4" y="334" font-size="4.3" fill="#ffffff" stroke="#ffffff" stroke-width="0.18" letter-spacing="0.12" shape-rendering="auto" >44</text>
<text x="495.4" y="334" font-size="4.3" fill="#ffffff" stroke="#ffffff" stroke-width="0.18" letter-spacing="0.12" shape-rendering="auto" >53</text>
<text x="512.9" y="334" font-size="4.3" fill="#ffffff" stroke="#ffffff" stroke-width="0.18" letter-spacing="0.12" shape-rendering="auto" >53</text>
<text x="529.9" y="334" font-size="4.3" fill="#ffffff" stroke="#ffffff" stroke-width="0.18" letter-spacing="0.12" shape-rendering="auto" >53</text>
<text x="551.4" y="334" font-size="4.3" fill="#ffffff" stroke="#ffffff" stroke-width="0.18" letter-spacing="0.12" shape-rendering="auto" >79</text>
<text x="572.9" y="334" font-size="4.3" fill="#ffffff" stroke="#ffffff" stroke-width="0.18" letter-spacing="0.12" shape-rendering="auto" >53</text>
<text x="589.9" y="334" font-size="4.3" fill="#ffffff" stroke="#ffffff" stroke-width="0.18" letter-spacing="0.12" shape-rendering="auto" >53</text>
<text x="607.4" y="334" font-size="4.3" fill="#ffffff" stroke="#ffffff" stroke-width="0.18" letter-spacing="0.12" shape-rendering="auto" >53</text>
<text x="622.4" y="334" font-size="4.3" fill="#ffffff" stroke="#ffffff" stroke-width="0.18" letter-spacing="0.12" shape-rendering="auto" >39</text>
<circle cx="507.5" cy="237.5" r="3.800" fill="none" stroke="#ffffff" stroke-width="1.400" shape-rendering="auto"/>
<rect x="501" y="237" width="13" height="1" fill="#ffffff"/>
<rect x="507" y="231" width="1" height="13" fill="#ffffff"/>
<rect x="507" y="215" width="1" height="23" fill="#ffffff"/>
<circle cx="541.5" cy="237.5" r="3.800" fill="none" stroke="#ffffff" stroke-width="1.400" shape-rendering="auto"/>
<rect x="535" y="237" width="13" height="1" fill="#ffffff"/>
<rect x="541" y="231" width="1" height="13" fill="#ffffff"/>
<rect x="541" y="215" width="1" height="23" fill="#ffffff"/>
<circle cx="489.5" cy="250.5" r="3.800" fill="none" stroke="#ffffff" stroke-width="1.400" shape-rendering="auto"/>
<rect x="483" y="250" width="13" height="1" fill="#ffffff"/>
<rect x="489" y="244" width="1" height="13" fill="#ffffff"/>
<rect x="489" y="215" width="1" height="36" fill="#ffffff"/>
<circle cx="524.5" cy="250.5" r="3.800" fill="none" stroke="#ffffff" stroke-width="1.400" shape-rendering="auto"/>
<rect x="518" y="250" width="13" height="1" fill="#ffffff"/>
<rect x="524" y="244" width="1" height="13" fill="#ffffff"/>
<rect x="524" y="215" width="1" height="36" fill="#ffffff"/>
<rect x="565" y="215" width="1" height="40" fill="#ffffff"/>
<circle cx="565.5" cy="255.500" r="2" fill="none" stroke="#ffffff" stroke-width="1" shape-rendering="auto"/>
<rect x="582" y="215" width="1" height="40" fill="#ffffff"/>
<circle cx="582.5" cy="255.500" r="2" fill="none" stroke="#ffffff" stroke-width="1" shape-rendering="auto"/>
<rect x="598" y="215" width="1" height="40" fill="#ffffff"/>
<circle cx="598.5" cy="255.500" r="2" fill="none" stroke="#ffffff" stroke-width="1" shape-rendering="auto"/>
<rect x="615" y="215" width="1" height="40" fill="#ffffff"/>
<circle cx="615.5" cy="255.500" r="2" fill="none" stroke="#ffffff" stroke-width="1" shape-rendering="auto"/>
<circle cx="507.5" cy="299.5" r="3.800" fill="none" stroke="#ffffff" stroke-width="1.400" shape-rendering="auto"/>
<rect x="501" y="299" width="13" height="1" fill="#ffffff"/>
<rect x="507" y="293" width="1" height="13" fill="#ffffff"/>
<rect x="507" y="299" width="1" height="37" fill="#ffffff"/>
<circle cx="541.5" cy="299.5" r="3.800" fill="none" stroke="#ffffff" stroke-width="1.400" shape-rendering="auto"/>
<rect x="535" y="299" width="13" height="1" fill="#ffffff"/>
<rect x="541" y="293" width="1" height="13" fill="#ffffff"/>
<rect x="541" y="299" width="1" height="37" fill="#ffffff"/>
<circle cx="584.5" cy="299.5" r="3.800" fill="none" stroke="#ffffff" stroke-width="1.400" shape-rendering="auto"/>
<rect x="578" y="299" width="13" height="1" fill="#ffffff"/>
<rect x="584" y="293" width="1" height="13" fill="#ffffff"/>
<rect x="584" y="299" width="1" height="37" fill="#ffffff"/>
<circle cx="619.5" cy="299.5" r="3.800" fill="none" stroke="#ffffff" stroke-width="1.400" shape-rendering="auto"/>
<rect x="613" y="299" width="13" height="1" fill="#ffffff"/>
<rect x="619" y="293" width="1" height="13" fill="#ffffff"/>
<rect x="619" y="299" width="1" height="37" fill="#ffffff"/>
<circle cx="489.5" cy="312.5" r="3.800" fill="none" stroke="#ffffff" stroke-width="1.400" shape-rendering="auto"/>
<rect x="483" y="312" width="13" height="1" fill="#ffffff"/>
<rect x="489" y="306" width="1" height="13" fill="#ffffff"/>
<rect x="489" y="312" width="1" height="24" fill="#ffffff"/>
<circle cx="524.5" cy="312.5" r="3.800" fill="none" stroke="#ffffff" stroke-width="1.400" shape-rendering="auto"/>
<rect x="518" y="312" width="13" height="1" fill="#ffffff"/>
<rect x="524" y="306" width="1" height="13" fill="#ffffff"/>
<rect x="524" y="312" width="1" height="24" fill="#ffffff"/>
<circle cx="567.5" cy="312.5" r="3.800" fill="none" stroke="#ffffff" stroke-width="1.400" shape-rendering="auto"/>
<rect x="561" y="312" width="13" height="1" fill="#ffffff"/>
<rect x="567" y="306" width="1" height="13" fill="#ffffff"/>
<rect x="567" y="312" width="1" height="24" fill="#ffffff"/>
<circle cx="601.5" cy="312.5" r="3.800" fill="none" stroke="#ffffff" stroke-width="1.400" shape-rendering="auto"/>
<rect x="595" y="312" width="13" height="1" fill="#ffffff"/>
<rect x="601" y="306" width="1" height="13" fill="#ffffff"/>
<rect x="601" y="312" width="1" height="24" fill="#ffffff"/>
<rect x="467" y="237" width="41" height="1" fill="#ffffff"/>
<rect x="467" y="250" width="23" height="1" fill="#ffffff"/>
<rect x="467" y="299" width="41" height="1" fill="#ffffff"/>
<rect x="463" y="312" width="27" height="1" fill="#ffffff"/>
<rect x="619" y="299" width="23" height="1" fill="#ffffff"/>
<rect x="601" y="312" width="41" height="1" fill="#ffffff"/>
<rect x="464" y="237" width="7" height="1" fill="#ffffff"/>
<rect x="464" y="250" width="7" height="1" fill="#ffffff"/>
<rect x="464" y="272" width="7" height="1" fill="#ffffff"/>
<rect x="464" y="299" width="7" height="1" fill="#ffffff"/>
<rect x="464" y="312" width="7" height="1" fill="#ffffff"/>
<rect x="630" y="272" width="15" height="1" fill="#ffffff"/>
<rect x="640" y="254" width="4" height="1" fill="#ffffff"/>
<rect x="636" y="284" width="4" height="1" fill="#ffffff"/>
<text transform="translate(466,230) rotate(-90)" font-size="4.3" fill="#ffffff" stroke="#ffffff" stroke-width="0.15" text-anchor="middle" shape-rendering="auto">45</text>
<text transform="translate(466,244) rotate(-90)" font-size="4.3" fill="#ffffff" stroke="#ffffff" stroke-width="0.15" text-anchor="middle" shape-rendering="auto">40</text>
<text transform="translate(466,262) rotate(-90)" font-size="4.3" fill="#ffffff" stroke="#ffffff" stroke-width="0.15" text-anchor="middle" shape-rendering="auto">4</text>
<text transform="translate(466,293) rotate(-90)" font-size="4.3" fill="#ffffff" stroke="#ffffff" stroke-width="0.15" text-anchor="middle" shape-rendering="auto">15</text>
<text transform="translate(466,319) rotate(-90)" font-size="4.3" fill="#ffffff" stroke="#ffffff" stroke-width="0.15" text-anchor="middle" shape-rendering="auto">38</text>
<text transform="translate(458,274) rotate(-90)" font-size="4.3" fill="#ffffff" stroke="#ffffff" stroke-width="0.15" text-anchor="middle" shape-rendering="auto">316</text>
<text transform="translate(640,240) rotate(-90)" font-size="4.3" fill="#ffffff" stroke="#ffffff" stroke-width="0.15" text-anchor="middle" shape-rendering="auto">85</text>
<text transform="translate(640,266) rotate(-90)" font-size="4.3" fill="#ffffff" stroke="#ffffff" stroke-width="0.15" text-anchor="middle" shape-rendering="auto">38</text>
<text transform="translate(640,306) rotate(-90)" font-size="4.3" fill="#ffffff" stroke="#ffffff" stroke-width="0.15" text-anchor="middle" shape-rendering="auto">45</text>
<text transform="translate(640,319) rotate(-90)" font-size="4.3" fill="#ffffff" stroke="#ffffff" stroke-width="0.15" text-anchor="middle" shape-rendering="auto">38</text>
<rect x="476" y="272" width="37" height="1" fill="#00e000"/>
<rect x="594" y="272" width="37" height="1" fill="#00e000"/>
<rect x="553" y="272" width="2" height="1" fill="#00e000"/>
<rect x="477" y="323" width="6" height="1" fill="#888"/>
<rect x="477" y="271" width="7" height="1" fill="#ddd"/>
<text x="385" y="277" font-size="5.2" fill="#00e8e8" stroke="#00e8e8" stroke-width="0.18" letter-spacing="0.12" shape-rendering="auto" >VISTA A</text>
<path d="M407 271 L407 278 L411 274.500 Z" fill="#ffffff"/>
<path d="M417.500 320.500 H426.500 V316.500 L435.500 325.500 H417.500 Z" fill="none" stroke="#ffffff" stroke-width="1"/>
<text x="419" y="324.8" font-size="3.8" fill="#8080ff" stroke="#8080ff" stroke-width="0.18" letter-spacing="0.12" shape-rendering="auto" >10</text>
<rect x="437.500" y="258.500" width="231.500" height="29" fill="none" stroke="#ed1c24" stroke-width="5" shape-rendering="auto"/>
<path d="M674.500 272.500 L761.500 232 L761.500 252.500 L849 252.500 L849 292.500 L761.500 292.500 L761.500 312.500 Z" fill="none" stroke="#ed1c24" stroke-width="5" stroke-linejoin="round" shape-rendering="auto"/>
<path d="M303.1 386.5 L305.5 386.2 L321.2 395.6 L342.7 398.1 L322.9 470.8 L301.4 468.3 L283.6 458.4 Z" fill="none" stroke="#ffffff" stroke-width="1"/>
<path d="M305.5 386.5 L285.7 459.3" fill="none" stroke="#ffffff" stroke-width="1"/>
<path d="M319.6 396.1 L300.2 467.9" fill="none" stroke="#ffffff" stroke-width="1"/>
<path d="M322.1 396.1 L302.7 468.5" fill="none" stroke="#ffffff" stroke-width="1"/>
<path d="M341.4 398.4 L321.6 470.3" fill="none" stroke="#ffffff" stroke-width="1"/>
<path d="M283.6 458.4 L283.6 460.1" fill="none" stroke="#ffffff" stroke-width="1"/>
<circle cx="311.0" cy="396.4" r="1.900" fill="#ffffff" shape-rendering="auto"/>
<circle cx="304.7" cy="402.2" r="1.900" fill="#ffffff" shape-rendering="auto"/>
<circle cx="306.7" cy="413.0" r="1.900" fill="#ffffff" shape-rendering="auto"/>
<circle cx="300.1" cy="418.3" r="1.900" fill="#ffffff" shape-rendering="auto"/>
<circle cx="301.1" cy="432.8" r="1.900" fill="#ffffff" shape-rendering="auto"/>
<circle cx="294.8" cy="438.3" r="1.900" fill="#ffffff" shape-rendering="auto"/>
<circle cx="296.4" cy="448.5" r="1.900" fill="#ffffff" shape-rendering="auto"/>
<circle cx="290.2" cy="454.6" r="1.900" fill="#ffffff" shape-rendering="auto"/>
<circle cx="325.9" cy="403.9" r="1.900" fill="#ffffff" shape-rendering="auto"/>
<circle cx="323.9" cy="411.8" r="1.900" fill="#ffffff" shape-rendering="auto"/>
<circle cx="321.9" cy="419.6" r="1.900" fill="#ffffff" shape-rendering="auto"/>
<circle cx="319.6" cy="427.5" r="1.900" fill="#ffffff" shape-rendering="auto"/>
<circle cx="325.4" cy="439.4" r="1.900" fill="#ffffff" shape-rendering="auto"/>
<circle cx="317.6" cy="446.9" r="1.900" fill="#ffffff" shape-rendering="auto"/>
<circle cx="320.6" cy="455.5" r="1.900" fill="#ffffff" shape-rendering="auto"/>
<circle cx="313.0" cy="462.6" r="1.900" fill="#ffffff" shape-rendering="auto"/>
<rect x="495" y="410" width="83" height="1" fill="#d0d0d0"/>
<rect x="495" y="408" width="1" height="42" fill="#d0d0d0"/>
<rect x="577" y="408" width="1" height="42" fill="#d0d0d0"/>
<path d="M495 410.500 l4 -1 v2z M578 410.500 l-4 -1 v2z" fill="#d0d0d0"/>
<text x="524" y="408.8" font-size="4.6" fill="#00e8e8" stroke="#00e8e8" stroke-width="0.18" letter-spacing="0.12" shape-rendering="auto" >259</text>
<path d="M495.2 451.8 L529.2 426.6 L533.9 425.0 L539.1 423.5 L544.4 425.0 L549.1 427.2 L577.8 451.8 L574.0 455.7 L545.0 431.3 L542.1 430.1 L539.1 429.8 L536.2 430.1 L532.7 431.3 L498.7 455.9 L495.2 451.8" fill="none" stroke="#00e000" stroke-width="1" />
<path d="M512.2 447.7 A34.4 34.4 0 0 0 564.9 450.0" fill="none" stroke="#d8d8d8" stroke-width="1.1" shape-rendering="auto"/>
<rect x="538" y="429" width="1" height="18" fill="#e8e8e8"/>
<text transform="translate(536.500,441) rotate(-90)" font-size="4.600" fill="#00e8e8" text-anchor="middle" shape-rendering="auto">R15</text>
<text x="533.5" y="458.8" font-size="4.6" fill="#00e8e8" stroke="#00e8e8" stroke-width="0.18" letter-spacing="0.12" shape-rendering="auto" >105°</text>
<text x="497.5" y="470.8" font-size="4.6" fill="#00e8e8" stroke="#00e8e8" stroke-width="0.18" letter-spacing="0.12" shape-rendering="auto" >VISTA A</text>
<path d="M507.2 438.3 L514.0 446.5" fill="none" stroke="#e00000" stroke-width="1" />
<path d="M565.2 438.3 L559.6 445.9" fill="none" stroke="#e00000" stroke-width="1" />
<path d="M513.4 439.3 L515.7 441.8" fill="none" stroke="#e020e0" stroke-width="1" />
<path d="M506.3 444.2 L508.7 447.5" fill="none" stroke="#e020e0" stroke-width="1" />
<path d="M560.8 438.6 L557.3 441.8" fill="none" stroke="#e020e0" stroke-width="1" />
<path d="M567.2 443.0 L564.1 446.5" fill="none" stroke="#e020e0" stroke-width="1" />
</svg>
<svg class="abs" style="left:0;top:110px" width="78" height="573" viewBox="0 110 78 573">
<defs>
<linearGradient id="gBtn" x1="0" y1="0" x2="0" y2="1"><stop offset="0" stop-color="#fbfbfb"/><stop offset="1" stop-color="#e0e0e0"/></linearGradient>
<g id="b1"><rect x="-0.500" y="0.500" width="36" height="39" fill="url(#gBtn)" stroke="#b2b2b2"/><rect x="-0.500" y="1.500" width="35" height="37" fill="none" stroke="#f6f6f6" stroke-opacity="0.7"/></g>
<g id="b2"><rect x="36.500" y="0.500" width="39" height="39" fill="url(#gBtn)" stroke="#b2b2b2"/><rect x="37.500" y="1.500" width="37" height="37" fill="none" stroke="#f6f6f6" stroke-opacity="0.7"/></g>
<path id="tr" d="M0 0 L0 -5 L-5 0 Z" fill="#222"/>
</defs>
<!-- grip -->
<g fill="#b8b8b8"><rect x="1" y="114" width="2" height="2"/><rect x="5" y="114" width="2" height="2"/><rect x="9" y="114" width="2" height="2"/><rect x="13" y="114" width="2" height="2"/><rect x="17" y="114" width="2" height="2"/><rect x="21" y="114" width="2" height="2"/><rect x="25" y="114" width="2" height="2"/><rect x="29" y="114" width="2" height="2"/><rect x="33" y="114" width="2" height="2"/><rect x="37" y="114" width="2" height="2"/><rect x="41" y="114" width="2" height="2"/><rect x="45" y="114" width="2" height="2"/><rect x="49" y="114" width="2" height="2"/><rect x="53" y="114" width="2" height="2"/><rect x="57" y="114" width="2" height="2"/><rect x="61" y="114" width="2" height="2"/><rect x="65" y="114" width="2" height="2"/><rect x="69" y="114" width="2" height="2"/><rect x="73" y="114" width="2" height="2"/></g>
<use href="#b1" y="130"/><use href="#b2" y="130"/>
<use href="#b1" y="170"/><use href="#b2" y="170"/>
<use href="#b1" y="210"/><use href="#b2" y="210"/>
<use href="#b1" y="250"/><use href="#b2" y="250"/>
<use href="#b1" y="290"/>
<use href="#b1" y="338"/><use href="#b2" y="338"/>
<use href="#b1" y="378"/>
<use href="#b1" y="426"/><use href="#b2" y="426"/>
<use href="#b1" y="466"/><use href="#b2" y="466"/>
<use href="#b1" y="514"/>
<!-- corner triangles -->
<use href="#tr" x="32" y="165"/><use href="#tr" x="72" y="165"/>
<use href="#tr" x="32" y="205"/><use href="#tr" x="72" y="205"/>
<use href="#tr" x="32" y="245"/><use href="#tr" x="72" y="245"/>
<use href="#tr" x="32" y="285"/><use href="#tr" x="72" y="285"/>
<use href="#tr" x="32" y="325"/>
<use href="#tr" x="72" y="373"/>
<use href="#tr" x="32" y="461"/>
<use href="#tr" x="72" y="501"/>
<use href="#tr" x="32" y="549"/>
<!-- points -->
<path d="M5 141.500h7M8.500 138v7M21 151.500h7M24.500 148v7M6 158.500h7M9.500 155v7" stroke="#222" stroke-width="1"/>
<!-- line -->
<path d="M43 157 L70 145" stroke="#333" stroke-width="1.200"/>
<!-- arc -->
<path d="M4 201 Q7 181 27 178" fill="none" stroke="#333" stroke-width="1.300"/>
<!-- circle -->
<circle cx="55.500" cy="189" r="11" fill="none" stroke="#333" stroke-width="1.300"/>
<!-- ellipse -->
<ellipse cx="16" cy="230" rx="15" ry="7" transform="rotate(-45 16 230)" fill="none" stroke="#333" stroke-width="1.300"/>
<!-- spline -->
<path d="M44 221 C42 236 54 250 62 228 C66 216 70 220 68 232 C66 240 60 236 56 228 C52 218 46 214 44 221 Z" fill="none" stroke="#333" stroke-width="1.300"/>
<!-- polyline -->
<path d="M11 265 Q4 266 6 271 Q7 274 12 274 L26 274" fill="none" stroke="#333" stroke-width="1.300"/>
<!-- shapes -->
<path d="M45 257 L54 257 L57.500 263.500 L54 270 L45 270 L41.500 263.500 Z" fill="none" stroke="#333" stroke-width="1.200"/><path d="M64 262 L70 271 L58.500 271 Z" fill="none" stroke="#333" stroke-width="1.200"/><rect x="42.500" y="275.500" width="16" height="8" fill="none" stroke="#333" stroke-width="1.200"/>
<!-- hatch -->
<path d="M4.500 309.500 L11.500 302.500 L27.500 302.500 L27.500 318 L4.500 318 Z" fill="#e2e2e2" stroke="#333" stroke-width="1"/><path d="M4.500 312.500l8-10M4.500 316l11-13.500M7 318l12.500-15.500M10.500 318l12.500-15.500M14 318l12.500-15.500M17.500 318l10-12M21 318l6.500-8M24.500 318l3-4" stroke="#4a4a4a" stroke-width="0.550"/><circle cx="18.500" cy="311" r="3.300" fill="#e4e4e4" stroke="#444" stroke-width="0.800"/>
<!-- A -->
<text x="4.500" y="367.500" font-size="32" font-family="Liberation Serif" fill="#111">A</text>
<!-- dim -->
<path d="M45.500 347v20M65.500 347v20M46 352h19" stroke="#222" stroke-width="1.200" fill="none"/><path d="M46 352l5-2.500v5zM65 352l-5-2.500v5z" fill="#111"/>
<!-- image -->
<rect x="3.500" y="389.500" width="25" height="18" rx="1.500" fill="#fff" stroke="#111" stroke-width="1.800"/><path d="M6 405 L6 402 L12 396.500 L16.500 400.500 L20 397 L26 402.500 L26 405 Z" fill="#111"/><circle cx="23" cy="394.300" r="1.900" fill="#111"/>
<!-- pencil + triangle + compass -->
<path d="M1 438.500 L1 459.500 L23 459.500 Z" fill="#cdcdcd" stroke="#8a8a8a" stroke-width="0.800"/><path d="M3 456 Q3 446 5 445.500 Q12 448 15.500 457.500 Z" fill="#bdbdbd" stroke="#8e8e8e" stroke-width="0.600"/><path d="M4 455.500 Q5 450 6.500 450 Q10 452 11.500 457" fill="none" stroke="#a0a0a0" stroke-width="0.600"/>
<path d="M6.500 434.500 L9.500 431.800 L18 439.800 L15.300 442.800 Z" fill="#de2c2c" stroke="#9c1c1c" stroke-width="0.600"/><path d="M8.500 433.800 L16.500 441.300" stroke="#f59090" stroke-width="0.900"/><path d="M18 439.800 L15.300 442.800 L19.500 444.200 Z" fill="#e8c48c"/><path d="M6.500 434.500 L9.500 431.800 L8.300 430.800 L5.600 433.500Z" fill="#c8c8c8"/>
<path d="M25.600 433 L23.200 455.500 M25.600 433 L28.800 455.500" stroke="#5a5a5a" stroke-width="1.300"/><path d="M24.500 438h2.500" stroke="#5a5a5a" stroke-width="2"/><circle cx="25.600" cy="432.800" r="1.300" fill="#777"/>
<!-- ruler -->
<rect x="42.500" y="440.500" width="27" height="9" rx="1.500" fill="#fafafa" stroke="#555" stroke-width="1"/><path d="M45.500 441v3M48.500 441v2M51.500 441v3M54.500 441v2M57.500 441v3M60.500 441v2M63.500 441v3M66.500 441v2" stroke="#555" stroke-width="0.700"/>
<!-- block -->
<rect x="4.500" y="475.500" width="19" height="13.500" fill="none" stroke="#444" stroke-width="1"/><circle cx="20.800" cy="487.800" r="8" fill="none" stroke="#555" stroke-width="1.100"/><path d="M2 489h3M3.500 487.500v3" stroke="#777" stroke-width="0.800"/>
<!-- select -->
<path d="M43 485 L63 473" stroke="#e03030" stroke-width="1.300"/><path d="M54 479.500 L54 492 L57 489.500 L59.500 495 L61.500 494 L59 488.800 L63 488.500 Z" fill="#f4f4f4" stroke="#555" stroke-width="0.800"/>
<!-- 3d box -->
<path d="M4.200 530.800 L18.300 522.200 L27.400 527 L27.400 538.500 L13.500 546.200 L4.200 541.400 Z M4.200 530.800 L13.500 535.200 L27.400 527 M13.500 535.200 L13.500 546.200" fill="none" stroke="#1a1a1a" stroke-width="1.100" stroke-linejoin="round"/>
</svg>

<svg class="abs" style="left:77px;top:109px" width="908" height="574" viewBox="77 109 908 574" font-family="Liberation Sans">
<rect x="78" y="110" width="903" height="24" fill="#f0f0f0"/>
<rect x="78" y="110" width="451" height="24" fill="#fff"/>
<rect x="78" y="109.500" width="452" height="1.500" fill="#8e939f"/>
<rect x="77.300" y="110" width="1.300" height="573" fill="#9a9ea8"/>
<rect x="529" y="111" width="1.500" height="23" fill="#8a90a0"/>
<rect x="529" y="133" width="452" height="1" fill="#a8acb4"/>
<linearGradient id="gQ" x1="0" y1="0" x2="1" y2="1"><stop offset="0" stop-color="#9aa8cc"/><stop offset="0.5" stop-color="#3a4f98"/><stop offset="1" stop-color="#1f3684"/></linearGradient><circle cx="98" cy="120.600" r="5.600" fill="#fbfbfd" stroke="url(#gQ)" stroke-width="2.200"/><path d="M94.500 120.300h6M97.500 117.300v6" stroke="#9a9aa8" stroke-width="0.600"/><path d="M94.500 122.500h4M99 117.500l1.500 3" stroke="#e07070" stroke-width="0.600"/><path d="M98.300 120.800L102.800 125" stroke="#f5a21a" stroke-width="2.200"/><circle cx="103.400" cy="126" r="1.300" fill="#e06060"/>
<text x="282.600" y="127.200" font-size="11.500" fill="#111" textLength="44.800" lengthAdjust="spacingAndGlyphs">CAD.dwg</text>
<rect x="502.500" y="115.500" width="13" height="13" rx="2.500" fill="#e8875c" stroke="#de4434" stroke-width="1.400"/><path d="M506 119l6 6M512 119l-6 6" stroke="#fff" stroke-width="1.800"/>
<rect x="79" y="134" width="885" height="22" fill="#eeeeee"/>
<rect x="79" y="156" width="21" height="442" fill="#eeeeee"/>

<rect x="114" y="153" width="1" height="3" fill="#222"/>
<rect x="147" y="153" width="1" height="3" fill="#222"/>
<rect x="179" y="149" width="1" height="7" fill="#222"/>
<text x="179.2" y="146" font-size="12" text-anchor="middle" fill="#111">0</text>
<rect x="212" y="153" width="1" height="3" fill="#222"/>
<rect x="245" y="153" width="1" height="3" fill="#222"/>
<rect x="277" y="153" width="1" height="3" fill="#222"/>
<rect x="310" y="153" width="1" height="3" fill="#222"/>
<rect x="342" y="149" width="1" height="7" fill="#222"/>
<text x="342.2" y="146" font-size="12" text-anchor="middle" fill="#111">500</text>
<rect x="375" y="153" width="1" height="3" fill="#222"/>
<rect x="408" y="153" width="1" height="3" fill="#222"/>
<rect x="440" y="153" width="1" height="3" fill="#222"/>
<rect x="473" y="153" width="1" height="3" fill="#222"/>
<rect x="505" y="149" width="1" height="7" fill="#222"/>
<text x="505.2" y="146" font-size="12" text-anchor="middle" fill="#111">1000</text>
<rect x="538" y="153" width="1" height="3" fill="#222"/>
<rect x="571" y="153" width="1" height="3" fill="#222"/>
<rect x="603" y="153" width="1" height="3" fill="#222"/>
<rect x="636" y="153" width="1" height="3" fill="#222"/>
<rect x="668" y="149" width="1" height="7" fill="#222"/>
<text x="668.2" y="146" font-size="12" text-anchor="middle" fill="#111">1500</text>
<rect x="701" y="153" width="1" height="3" fill="#222"/>
<rect x="734" y="153" width="1" height="3" fill="#222"/>
<rect x="766" y="153" width="1" height="3" fill="#222"/>
<rect x="799" y="153" width="1" height="3" fill="#222"/>
<rect x="831" y="149" width="1" height="7" fill="#222"/>
<text x="831.2" y="146" font-size="12" text-anchor="middle" fill="#111">2000</text>
<rect x="864" y="153" width="1" height="3" fill="#222"/>
<rect x="897" y="153" width="1" height="3" fill="#222"/>
<rect x="929" y="153" width="1" height="3" fill="#222"/>
<rect x="962" y="153" width="1" height="3" fill="#222"/>
<rect x="94" y="161" width="6" height="1" fill="#222"/>
<text transform="translate(89.800,161.5) rotate(-90)" font-size="12" text-anchor="middle" fill="#111">500</text>
<rect x="97" y="194" width="3" height="1" fill="#222"/>
<rect x="97" y="227" width="3" height="1" fill="#222"/>
<rect x="97" y="259" width="3" height="1" fill="#222"/>
<rect x="97" y="292" width="3" height="1" fill="#222"/>
<rect x="94" y="324" width="6" height="1" fill="#222"/>
<text transform="translate(89.800,324.5) rotate(-90)" font-size="12" text-anchor="middle" fill="#111">0</text>
<rect x="97" y="357" width="3" height="1" fill="#222"/>
<rect x="97" y="390" width="3" height="1" fill="#222"/>
<rect x="97" y="422" width="3" height="1" fill="#222"/>
<rect x="97" y="455" width="3" height="1" fill="#222"/>
<rect x="94" y="487" width="6" height="1" fill="#222"/>
<text transform="translate(89.800,487.5) rotate(-90)" font-size="12" text-anchor="middle" fill="#111">-500</text>
<rect x="97" y="520" width="3" height="1" fill="#222"/>
<rect x="97" y="553" width="3" height="1" fill="#222"/>
<rect x="97" y="585" width="3" height="1" fill="#222"/>
<path d="M149 149.500 L156 149.500 L152.500 153 Z" fill="#111"/>
<g clip-path="url(#cv)"></g><defs><clipPath id="cv"><rect x="79" y="156" width="21" height="442"/></clipPath></defs>
<rect x="79.500" y="134.500" width="20" height="21" fill="#f0f0f0" stroke="#fbfbfb"/><rect x="79" y="134" width="21" height="1" fill="#a8a8a8"/><rect x="79" y="134" width="1" height="22" fill="#a8a8a8"/><path d="M93.500 299.500 L93.500 306.500 L97 303 Z" fill="#111"/>
<rect x="964" y="134" width="17" height="22" fill="#f0f0f0"/><rect x="964.500" y="134.500" width="16" height="21" fill="none" stroke="#fcfcfc"/><rect x="964" y="134" width="17" height="1" fill="#a0a0a0"/><rect x="964" y="134" width="1" height="22" fill="#a0a0a0"/>
<rect x="964" y="156" width="17" height="442" fill="#fff"/><rect x="964.500" y="156.500" width="16" height="441" fill="none" stroke="#e2e2e2"/>
<rect x="964.500" y="156.500" width="16" height="16" fill="#fff" stroke="#dadada"/><path d="M969 167 L972.500 163.500 L976 167" fill="none" stroke="#555" stroke-width="1.300"/>
<rect x="964.500" y="581.500" width="16" height="16" fill="#fff" stroke="#dadada"/><path d="M969 587 L972.500 590.500 L976 587" fill="none" stroke="#555" stroke-width="1.300"/>
<rect x="964.500" y="332.500" width="15.500" height="89" fill="#dcdcdc" stroke="#b0b0b0"/>
<rect x="79" y="598" width="21" height="17" fill="#f0f0f0"/><rect x="79.500" y="599.500" width="20" height="15" fill="none" stroke="#b8b8b8"/>
<rect x="100" y="598" width="805" height="16.500" fill="#fff"/><rect x="100.500" y="598.500" width="804" height="15.500" fill="none" stroke="#e2e2e2"/>
<rect x="100.500" y="598.500" width="16" height="15.500" fill="#fff" stroke="#dadada"/><path d="M111 603 L107.500 606.500 L111 610" fill="none" stroke="#555" stroke-width="1.300"/>
<rect x="888.500" y="598.500" width="16" height="15.500" fill="#fff" stroke="#dadada"/><path d="M894 603 L897.500 606.500 L894 610" fill="none" stroke="#555" stroke-width="1.300"/>
<rect x="348.500" y="598.500" width="308" height="15.500" fill="#dcdcdc" stroke="#b0b0b0"/>
<text x="926" y="610.8" font-size="11" fill="#111" textLength="54.4" lengthAdjust="spacingAndGlyphs">100 &lt; 1000</text>
<rect x="79" y="616" width="902" height="41" fill="#fff"/>
<clipPath id="lg"><rect x="79" y="619.5" width="884" height="38"/></clipPath>
<g clip-path="url(#lg)" font-size="11" fill="#111"><text x="82.5" y="625.3" textLength="260.3" lengthAdjust="spacingAndGlyphs">Abrindo o desenho: C:\temp\croquis\2pdf\CAD.dwg...</text><text x="82.5" y="638" textLength="316" lengthAdjust="spacingAndGlyphs">Desenho carregado com sucesso: C:\temp\croquis\2pdf\CAD.dwg</text><text x="82.5" y="651" textLength="256.7" lengthAdjust="spacingAndGlyphs">Formato: R21 (2007) DWG Desenho (Teigha) (*.dwg)</text></g>
<rect x="79" y="615" width="902" height="2.500" fill="#eeeeee"/>
<rect x="963.500" y="619.500" width="16" height="37" fill="#fff" stroke="#d0d0d0"/>
<rect x="963.500" y="619.500" width="16" height="16" fill="#fff" stroke="#d0d0d0"/><path d="M968 630 L971.500 626.500 L975 630" fill="none" stroke="#555" stroke-width="1.300"/>
<rect x="963.500" y="640.500" width="16" height="16" fill="#fff" stroke="#d0d0d0"/><path d="M968 646 L971.500 649.500 L975 646" fill="none" stroke="#555" stroke-width="1.300"/>
<rect x="964" y="636" width="15" height="4" fill="#c8c8c8"/>
<rect x="79" y="657" width="902" height="1" fill="#a0a0a0"/>
<rect x="79" y="658" width="902" height="24" fill="#fff"/>
<text x="79.5" y="675.8" font-size="11" fill="#111" textLength="47" lengthAdjust="spacingAndGlyphs">Comando:</text>
<rect x="958.500" y="661.500" width="20" height="19" fill="#d8d8d8" stroke="#8a8a8a"/><rect x="961.500" y="666.500" width="14" height="9" fill="#e8e8e8" stroke="#555"/><rect x="961" y="666" width="15" height="3" fill="#111"/>
<rect x="78" y="682" width="904" height="1.300" fill="#8c94a4"/>
<rect x="980.500" y="156" width="1.100" height="527" fill="#a8acb8"/>
</svg>
<svg class="abs" style="left:985px;top:110px" width="42" height="573" viewBox="985 110 42 573" font-family="Liberation Sans">
<rect x="985.500" y="111.500" width="45" height="18" fill="#e0e0e0" stroke="#c8c8c8"/>
<text x="989" y="125.500" font-size="11.500" fill="#111" textLength="37" lengthAdjust="spacingAndGlyphs">Lista de</text>
<rect x="986.500" y="133.500" width="45" height="19" fill="#dddddd" stroke="#8c8c8c"/>
<path d="M1002 143 Q1010 133.500 1018.500 143 Q1010 152.500 1002 143 Z" fill="#111"/><path d="M1004.200 143.300 Q1010 137.200 1016.300 143.300 Q1010 149 1004.200 143.300Z" fill="#ddd"/><circle cx="1010.200" cy="142.600" r="3.500" fill="#111"/><circle cx="1009.200" cy="141.400" r="1" fill="#999"/>
<rect x="985.500" y="154.500" width="45" height="528" fill="#fff" stroke="#8c94a4"/>
<g font-size="12" fill="#111">
<rect x="989.500" y="160.500" width="15" height="8" fill="#fff" stroke="#222"/><text x="1011" y="169">0</text>
<rect x="989.500" y="178.500" width="15" height="8" fill="#fff" stroke="#222"/><text x="1011" y="187">1</text>
<rect x="989.500" y="196.500" width="15" height="8" fill="#fff" stroke="#222"/><text x="1011" y="205">2</text>
<rect x="989.500" y="214.500" width="15" height="8" fill="#fff" stroke="#222"/><text x="1011" y="223" textLength="20" lengthAdjust="spacingAndGlyphs">DEF</text>
<rect x="989.500" y="232.500" width="15" height="8" fill="#fff" stroke="#222"/><text x="1011" y="241" textLength="15" lengthAdjust="spacingAndGlyphs">FO</text>
<rect x="989.500" y="250.500" width="15" height="8" fill="#00ffff" stroke="#222"/><text x="1011" y="259" textLength="15" lengthAdjust="spacingAndGlyphs">FO</text>
<rect x="989.500" y="268.500" width="15" height="8" fill="#00ff00" stroke="#222"/><text x="1011" y="277" textLength="8" lengthAdjust="spacingAndGlyphs">G</text>
<rect x="989.500" y="286.500" width="15" height="8" fill="#fff" stroke="#222"/><text x="1011" y="295" textLength="16.5" lengthAdjust="spacingAndGlyphs">MA</text>
<rect x="989.500" y="304.500" width="15" height="8" fill="#ff0000" stroke="#222"/><text x="1011" y="313">S</text>
</g>
</svg>

<svg class="abs" style="left:0;top:683px" width="1027" height="43" viewBox="0 683 1027 43" font-family="Liberation Sans" font-size="12" fill="#111">
<text x="0.5" y="701.3" textLength="27" lengthAdjust="spacingAndGlyphs">85;61</text>
<text x="-4" y="720" textLength="42" lengthAdjust="spacingAndGlyphs">@-85;61</text>
<rect x="211" y="687" width="1" height="39" fill="#c0c0c0"/>
<text x="215.2" y="701.3" textLength="48" lengthAdjust="spacingAndGlyphs">105&lt;145°</text>
<text x="215.2" y="720" textLength="59.5" lengthAdjust="spacingAndGlyphs">@105&lt;145°</text>
<text x="452" y="703.3" font-size="12.5" textLength="143" lengthAdjust="spacingAndGlyphs">Selecione uma entidade ou</text>
<text x="535.5" y="718.8" font-size="12.5" textLength="59.5" lengthAdjust="spacingAndGlyphs">uma região</text>
<g>
<path d="M611.5 690.5 Q609.5 688 610.5 685.5" stroke="#777" fill="none" stroke-width="0.9"/>
<ellipse cx="618" cy="706" rx="11.5" ry="15" transform="rotate(-22 618 706)" fill="#f7f7f7" stroke="#b4b4b4" stroke-width="1"/>
<path d="M607 703 Q617 706 626 697" stroke="#d0d0d0" fill="none" stroke-width="0.9"/>
<ellipse cx="621" cy="712" rx="8.5" ry="7.5" transform="rotate(-22 621 712)" fill="#e6e6e6"/>
<ellipse cx="613.3" cy="696.5" rx="2" ry="3.6" transform="rotate(-22 613.3 696.5)" fill="#4a6ad0"/>
</g>
<text x="810.4" y="711.3" font-size="12.5" textLength="186.3" lengthAdjust="spacingAndGlyphs">Nenhuma entidade foi selecionada.</text>
</svg>

</body></html>
